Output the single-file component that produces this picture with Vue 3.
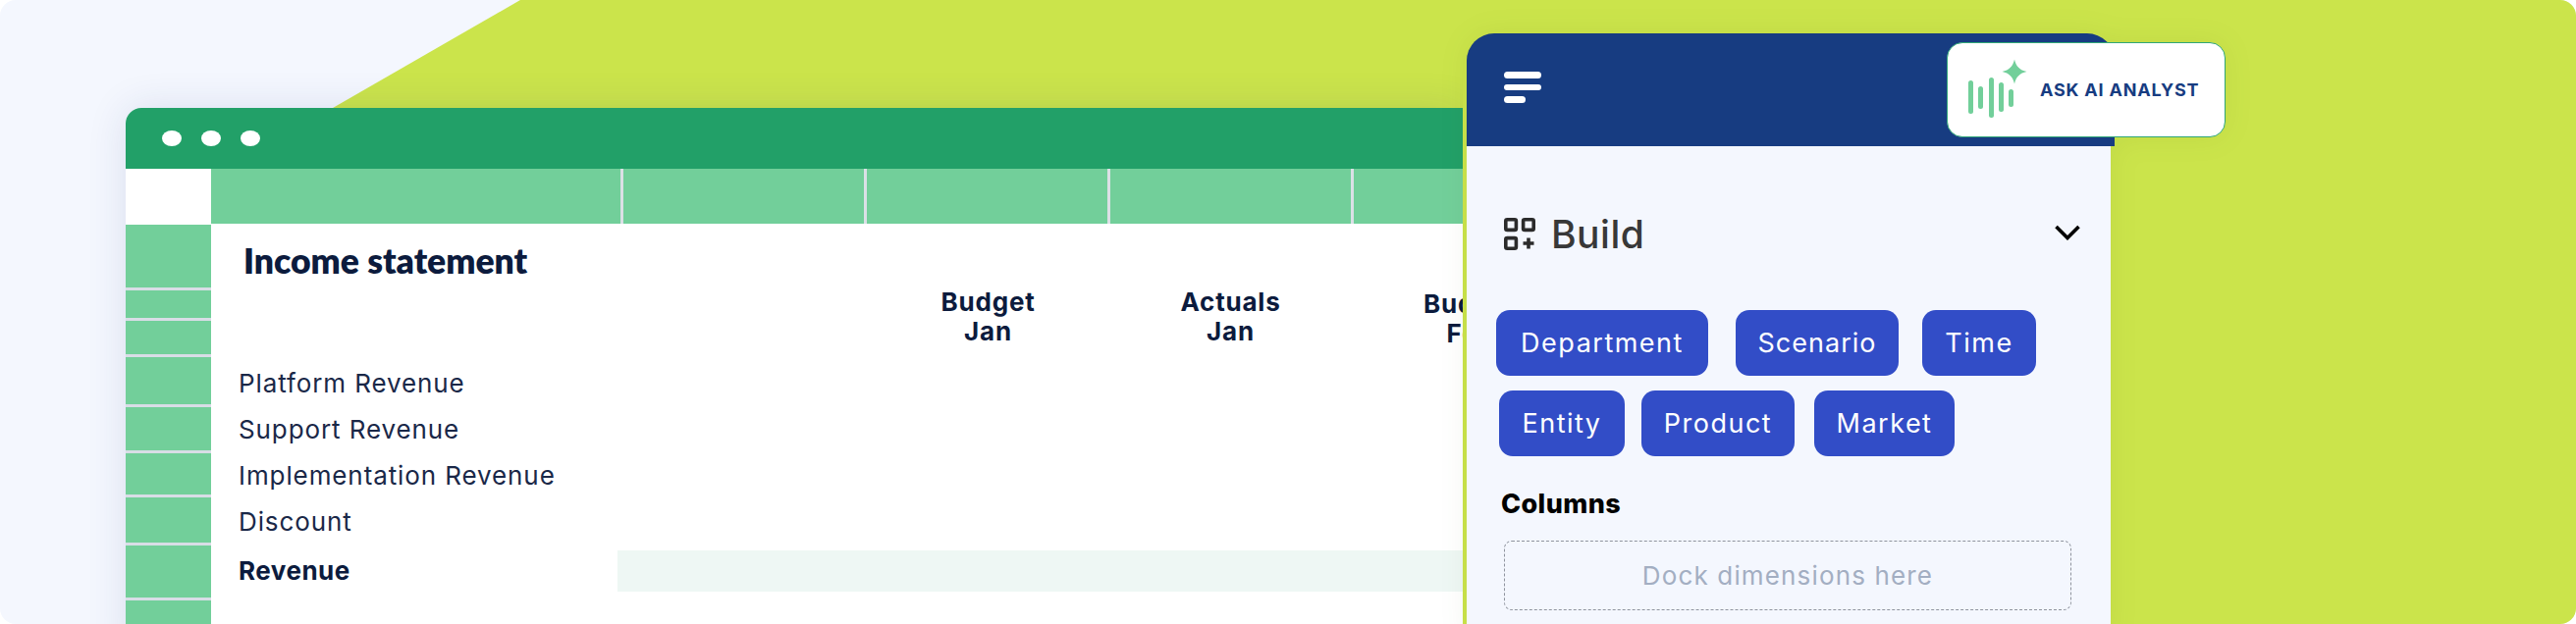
<script setup>
const headCells = [417, 245, 245, 245, 245]
const sideCells = [64, 28, 34, 48, 44, 42, 46, 53, 60]
const labels = ['Platform Revenue', 'Support Revenue', 'Implementation Revenue', 'Discount']
const columns = [
  { top: 'Budget', bottom: 'Jan', cls: '' },
  { top: 'Actuals', bottom: 'Jan', cls: '' },
  { top: 'Budget', bottom: 'Feb', cls: 'low' }
]
const bars = [
  { x: 0, y: 22, h: 34 },
  { x: 10, y: 28, h: 23 },
  { x: 21, y: 19, h: 41 },
  { x: 31, y: 24, h: 30 },
  { x: 41, y: 31, h: 18 }
]
const chipsOne = [
  { name: 'Department', cls: 'dept' },
  { name: 'Scenario', cls: 'scen' },
  { name: 'Time', cls: 'time' }
]
const chipsTwo = [
  { name: 'Entity', cls: 'enti' },
  { name: 'Product', cls: 'prod' },
  { name: 'Market', cls: 'mark' }
]
</script>

<template>
  <div class="stage">
    <div class="lime"></div>
    <section class="window">
      <header class="titlebar">
        <i class="dot"></i><i class="dot"></i><i class="dot"></i>
      </header>
      <div class="headrow">
        <div class="corner"></div>
        <div class="headcells">
          <div v-for="(w, i) in headCells" :key="i" class="headcell" :style="{ width: w + 'px' }"></div>
        </div>
      </div>
      <div class="sheet">
        <aside class="side">
          <div v-for="(h, i) in sideCells" :key="i" class="sidecell" :style="{ height: h + 'px' }"></div>
        </aside>
        <main class="main">
          <h1 class="title">Income statement</h1>
          <div class="heads">
            <div v-for="c in columns" :key="c.top + c.bottom" class="colhead" :class="c.cls">
              <span>{{ c.top }}</span>
              <span>{{ c.bottom }}</span>
            </div>
          </div>
          <div class="rows">
            <div v-for="l in labels" :key="l" class="row">{{ l }}</div>
            <div class="row total">
              <span class="totallabel">Revenue</span>
              <span class="fill"></span>
            </div>
          </div>
        </main>
      </div>
    </section>

    <section class="panel">
      <header class="panelhead">
        <div class="burger"><i></i><i></i><i class="short"></i></div>
      </header>
      <div class="badge">
        <svg class="wave" width="62" height="62" viewBox="0 0 62 62" aria-hidden="true">
          <rect v-for="b in bars" :key="b.x" :x="b.x" :y="b.y" width="5" :height="b.h" rx="2.5" fill="#72cf9a" />
          <path transform="translate(34.5 0.5)" d="M12.5 0C14 7 18 11 25 12.5C18 14 14 18 12.5 25C11 18 7 14 0 12.5C7 11 11 7 12.5 0Z" fill="#72cf9a" />
        </svg>
        <span class="asktext">ASK AI ANALYST</span>
      </div>
      <div class="panelbody">
        <div class="buildrow">
          <svg class="buildicon" width="32" height="33" viewBox="0 0 32 33" fill="none" stroke="#2b2b2b" stroke-width="3.6" aria-hidden="true">
            <rect x="1.8" y="1.8" width="10.6" height="10.6" rx="1.5" />
            <rect x="19.6" y="1.8" width="10.6" height="10.6" rx="1.5" />
            <rect x="1.8" y="20.6" width="10.6" height="10.6" rx="1.5" />
            <path d="M19.5 26H30.5M25 20.5V31.5" />
          </svg>
          <span class="buildtext">Build</span>
          <svg class="chev" width="26" height="16" viewBox="0 0 26 16" fill="none" stroke="#000" stroke-width="3.6" aria-hidden="true">
            <path d="M1.5 2L13 13.5L24.5 2" />
          </svg>
        </div>
        <div class="chips one">
          <span v-for="c in chipsOne" :key="c.name" class="chip" :class="c.cls">{{ c.name }}</span>
        </div>
        <div class="chips two">
          <span v-for="c in chipsTwo" :key="c.name" class="chip" :class="c.cls">{{ c.name }}</span>
        </div>
        <h2 class="columns">Columns</h2>
        <div class="dock">Dock dimensions here</div>
      </div>
    </section>
  </div>
</template>

<style>
html, body { margin: 0; background: #fff; }
</style>

<style scoped>
.stage {
  position: relative;
  width: 2624px;
  height: 636px;
  overflow: hidden;
  display: flex;
  align-items: flex-start;
  padding: 34px 0 0 128px;
  box-sizing: border-box;
  background: #f4f7fe;
  border-radius: 16px;
  font-family: Inter, "Noto Sans", sans-serif;
}
.lime {
  position: absolute;
  inset: 0;
  background: #cbe44b;
  clip-path: polygon(530px 0, 2624px 0, 2624px 636px, 339px 636px, 339px 110px);
}
.window {
  position: relative;
  flex: none;
  width: 1362px;
  height: 560px;
  margin-top: 76px;
  background: #fff;
  border-radius: 16px 0 0 0;
  overflow: hidden;
  box-shadow: 0 0 40px rgba(30, 50, 120, 0.12);
  clip-path: inset(-60px 0 0 -60px);
}
.titlebar {
  display: flex;
  align-items: center;
  gap: 20px;
  height: 62px;
  padding: 0 0 0 37px;
  background: #22a068;
}
.dot {
  width: 20px;
  height: 16px;
  border-radius: 50%;
  background: #fff;
}
.headrow {
  display: flex;
  height: 56px;
}
.corner {
  flex: none;
  width: 87px;
}
.headcells {
  display: flex;
  gap: 3px;
  flex: 1;
  background: #dbe0e6;
}
.headcell {
  flex: none;
  background: #72cf9a;
}
.sheet {
  display: flex;
  padding-top: 1px;
}
.side {
  flex: none;
  width: 87px;
  display: flex;
  flex-direction: column;
  gap: 3px;
  background: #d8dde6;
}
.sidecell {
  flex: none;
  background: #72cf9a;
}
.main {
  flex: 1;
  min-width: 0;
  padding-top: 17px;
  color: #0c1b3d;
}
.title {
  margin: 0 0 0 33px;
  font: 800 35.5px/40px Lato, sans-serif;
}
.heads {
  display: grid;
  grid-template-columns: 247px 247px 242px;
  margin: 7px 0 0 668px;
}
.colhead {
  display: flex;
  flex-direction: column;
  align-items: center;
  font-size: 26px;
  font-weight: 700;
  line-height: 30px;
  letter-spacing: 0.8px;
}
.colhead.low {
  padding-top: 2px;
}
.rows {
  margin-top: 12px;
}
.row {
  height: 47px;
  padding-left: 28px;
  font-size: 26px;
  font-weight: 400;
  line-height: 47px;
  letter-spacing: 0.9px;
  color: #1a2848;
}
.total {
  display: flex;
  height: 42px;
  margin-top: 6px;
  padding-left: 0;
  line-height: 42px;
}
.totallabel {
  flex: none;
  width: 386px;
  padding-left: 28px;
  font-weight: 700;
  letter-spacing: 0.5px;
  color: #0c1b3d;
}
.fill {
  flex: 1;
  background: #eef7f4;
}
.panel {
  position: relative;
  flex: none;
  width: 660px;
  margin-left: 4px;
  border-radius: 28px 28px 0 0;
  filter: drop-shadow(0 0 14px rgba(60, 80, 20, 0.07));
}
.panelhead {
  height: 115px;
  background: #173c81;
  border-radius: 28px 28px 0 0;
  padding: 39px 0 0 38px;
  box-sizing: border-box;
}
.burger {
  display: flex;
  flex-direction: column;
  gap: 6px;
  width: 38px;
}
.burger i {
  height: 6.5px;
  border-radius: 4px;
  background: #fff;
}
.burger .short {
  width: 22px;
}
.badge {
  position: absolute;
  top: 8.5px;
  left: 488.5px;
  width: 284px;
  height: 97px;
  box-sizing: border-box;
  display: flex;
  align-items: center;
  gap: 11px;
  padding-left: 21.5px;
  background: #fff;
  border: 1px solid #2fa678;
  border-radius: 16px;
}
.wave {
  flex: none;
}
.asktext {
  font-size: 18px;
  font-weight: 700;
  letter-spacing: 0.8px;
  white-space: nowrap;
  color: #173c81;
}
.panelbody {
  width: 656px;
  height: 500px;
  background: #f4f7fe;
  overflow: hidden;
}
.buildrow {
  display: flex;
  align-items: center;
  height: 33px;
  margin-top: 73px;
  padding: 0 31px 0 38px;
}
.buildtext {
  flex: 1;
  margin-left: 16px;
  font-size: 39px;
  font-weight: 500;
  line-height: 33px;
  color: #383838;
  letter-spacing: 0.5px;
}
.chev {
  flex: none;
  margin-top: -4px;
}
.chips {
  display: flex;
}
.chips.one {
  margin: 61px 0 0 30px;
}
.chips.two {
  margin: 15px 0 0 33px;
}
.chip {
  flex: none;
  display: flex;
  align-items: center;
  justify-content: center;
  height: 67px;
  border-radius: 14px;
  background: #324dc7;
  color: #fff;
  font-size: 27px;
  letter-spacing: 1.5px;
}
.dept { width: 216px; }
.scen { width: 166px; margin-left: 28px; letter-spacing: 1px; }
.time { width: 116px; margin-left: 24px; }
.enti { width: 128px; }
.prod { width: 156px; margin-left: 17px; }
.mark { width: 143px; margin-left: 20px; }
.columns {
  margin: 34px 0 0 35px;
  font-size: 27px;
  font-weight: 800;
  line-height: 30px;
  letter-spacing: 0.4px;
  color: #000;
}
.dock {
  width: 578px;
  height: 71px;
  margin: 22px 0 0 38px;
  box-sizing: border-box;
  display: flex;
  align-items: center;
  justify-content: center;
  border: 1px dashed #8f949e;
  border-radius: 8px;
  font-size: 26px;
  letter-spacing: 1.15px;
  color: #a3aec2;
}
</style>
